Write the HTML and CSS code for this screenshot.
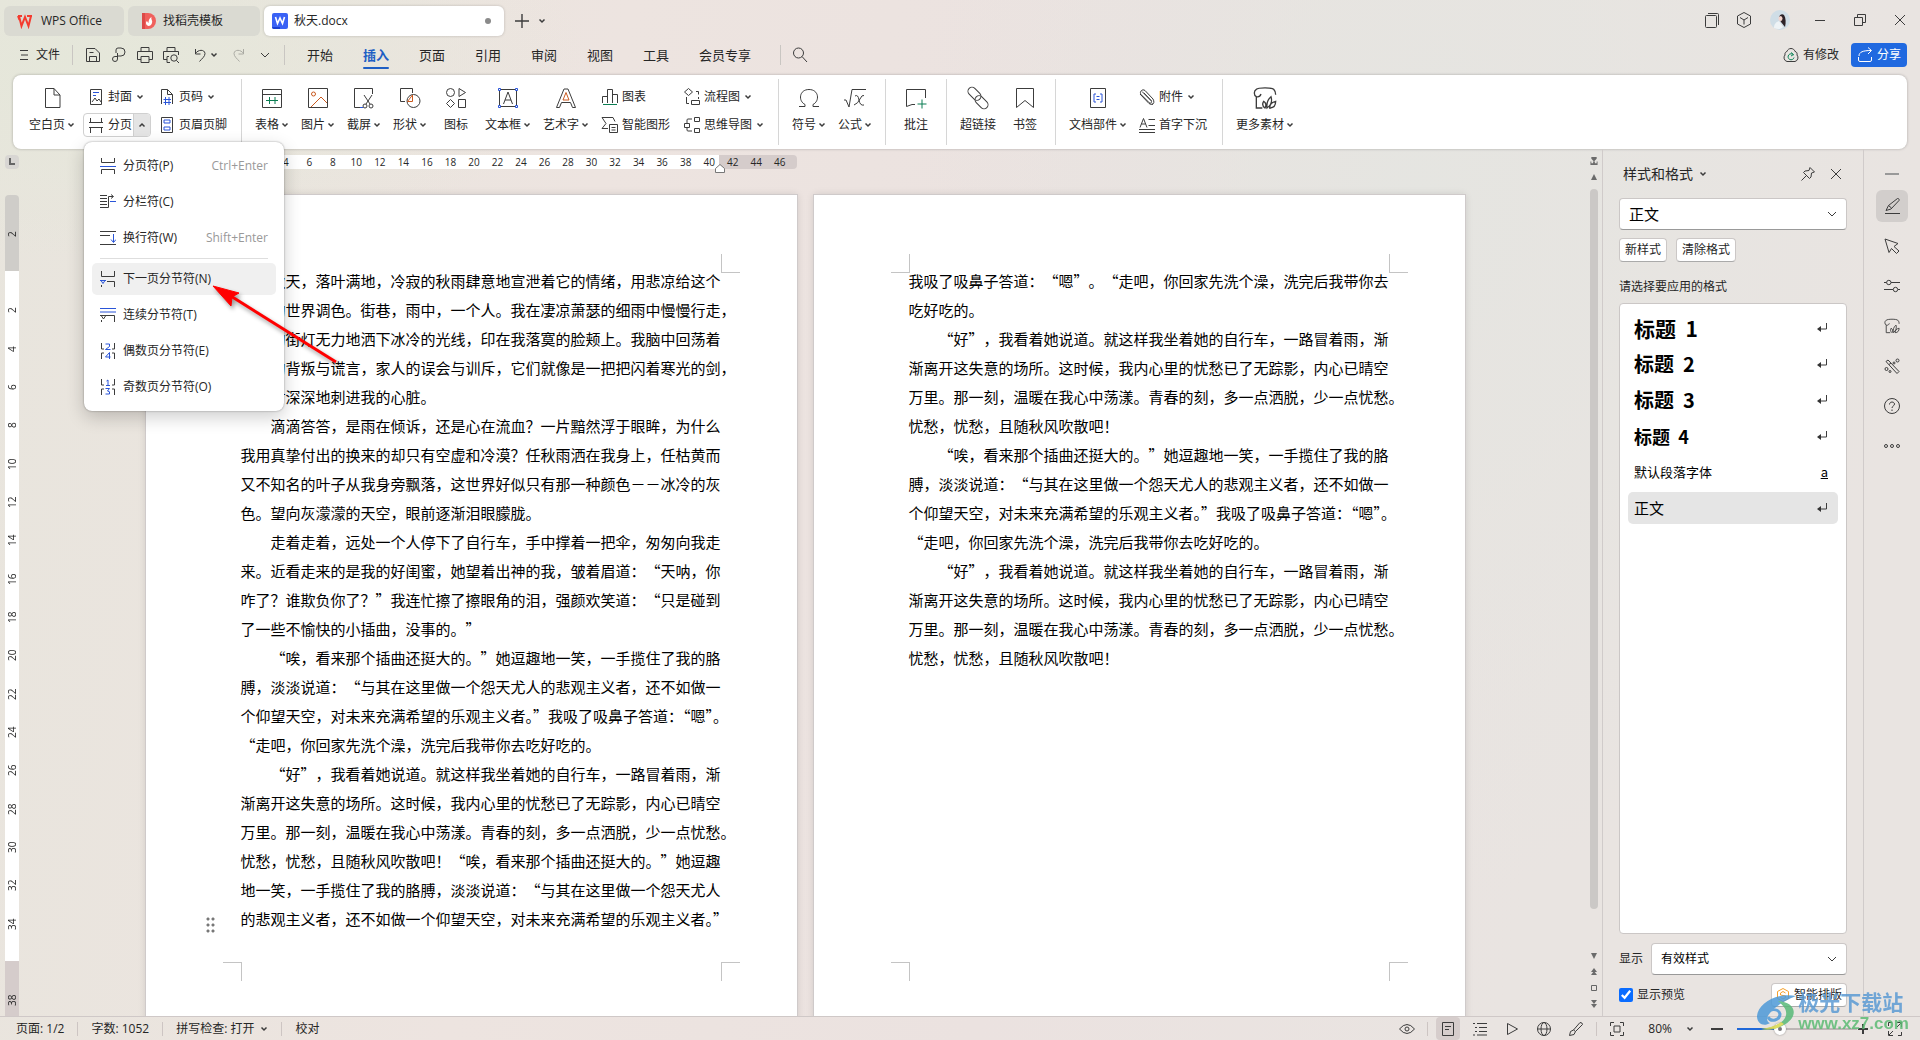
FILE: index.html
```html
<!DOCTYPE html>
<html lang="zh-CN">
<head>
<meta charset="utf-8">
<title>秋天.docx - WPS Office</title>
<link rel="stylesheet" href="styles.css">
</head>
<body>
<svg class="sprite" width="0" height="0" aria-hidden="true">
  <symbol id="caret" viewBox="0 0 8 8"><path d="M1.5 2.5 4 5l2.5-2.5" stroke-width="1.5"/></symbol>
  <symbol id="caret-up" viewBox="0 0 8 8"><path d="M1.5 5.5 4 3l2.5 2.5" stroke-width="1.5"/></symbol>
  <symbol id="chevron" viewBox="0 0 12 12"><path d="M2 4l4 4 4-4"/></symbol>
  <symbol id="close" viewBox="0 0 12 12"><path d="M1 1l10 10M11 1 1 11"/></symbol>
  <symbol id="para" viewBox="0 0 12 12"><path d="M10.5 1v6H3"/><path d="M1 7l4-3v6z" fill="#333" stroke="none"/></symbol>
  <symbol id="pagebreak" viewBox="0 0 16 16"><path d="M1.500 0v4.500h13V0M1.500 16v-4.500h13V16"/><path class="blue" d="M0 8.500h16"/></symbol>
  <symbol id="clip-leaf" viewBox="0 0 18 18"><path d="M7 16.500H2.500V8C.5 7 .5 3.500 2.500 2.500 4 1 14 1 15.500 2.500c1 1 1.500 2 1.500 4M2.500 8c2 .5 3-.5 3.500-2"/><path d="M9 16.500c-2-1.500-2-3.500-1-5 2 1 2 3.500 1 5zm1.500 0c-.5-4 .5-6.500 3-8.500 1 3 0 6.500-3 8.500zm2 0c0-2.500 1.500-4.500 4.500-5 0 3-1.500 5-4.500 5z"/></symbol>
</svg>

<header class="titlebar">
  <nav class="doctabs">
    <a class="doctab home" href="#"><svg class="i16" viewBox="0 0 16 16"><path d="M1 3h4M10 3h5M2 3l2.500 10L8 4l3.500 9L14 3M1 3l1.500 4" stroke="#f43b2f" stroke-width="2"/></svg>WPS Office</a>
    <a class="doctab docer" href="#"><svg class="i16" viewBox="0 0 16 16"><path d="M1 0h6a8 8 0 0 1 0 16H1z" fill="#f0605c" stroke="none"/><path d="M1 0h3v16H1z" fill="#dc4a48" stroke="none"/><path d="M7.500 13c-3-1-3-4-1.500-5 .5 1 1 1.500 1.500 2 0-3 1-5 3-6-1 2 1.500 4 .5 6-.5 2-2 3-3.500 3z" fill="#fff" stroke="none"/></svg>找稻壳模板</a>
    <a class="doctab active" href="#"><svg class="i16" viewBox="0 0 16 16"><rect width="16" height="16" rx="2" fill="#3a62f5" stroke="none"/><path d="M0 14h8v2H2q-2 0-2-2z" fill="#1a3fd0" stroke="none"/><path d="M3.500 4 5.500 10.500 8 5l2.500 5.500L12.500 4" stroke="#fff" stroke-width="1.600"/></svg>秋天.docx<i class="dirty"></i></a>
    <button class="bare" aria-label="新建"><svg class="i14" viewBox="0 0 14 14"><path d="M7 0v14M0 7h14" stroke-width="1.400"/></svg></button>
    <button class="bare" aria-label="标签列表"><svg class="i8"><use href="#caret"/></svg></button>
  </nav>
  <div class="winctl">
    <button class="bare w32" aria-label="窗口"><svg class="i16" viewBox="0 0 16 16"><rect x="1.500" y="3.500" width="11" height="12" rx="1"/><path d="M4 1.500h9.500q1 0 1 1V13"/></svg></button>
    <button class="bare w32" aria-label="应用"><svg class="i16" viewBox="0 0 16 16"><path d="M8 .5 14.500 4v8L8 15.500 1.500 12V4zM4 5.500 8 8l4-2.500M8 8v4.500"/></svg></button>
    <button class="bare w40" aria-label="账号"><svg class="i20" viewBox="0 0 20 20"><circle cx="10" cy="10" r="10" fill="#cfdde6" stroke="none"/><path d="M4 18c0-4 2-6 5-7l4 6c-3 3-6 2-9 1z" fill="#eef3f6" stroke="none"/><path d="M9 8c0-3 3-5 5-3 2 3 2 8 1 12l-4-5z" fill="#2c2228" stroke="none"/><ellipse cx="10.500" cy="8.500" rx="2" ry="2.500" fill="#f3d5cd" stroke="none"/></svg></button>
    <button class="bare w40" aria-label="最小化"><svg class="i12" viewBox="0 0 12 12"><path d="M1 6.500h10"/></svg></button>
    <button class="bare w40" aria-label="还原"><svg class="i14" viewBox="0 0 14 14"><path d="M1.500 4.500h8v8h-8zM4.500 4.500v-3h8v8h-3"/></svg></button>
    <button class="bare w40" aria-label="关闭"><svg class="i12"><use href="#close"/></svg></button>
  </div>
</header>

<div class="menubar">
  <div class="quick">
    <button class="bare file"><svg class="i10" viewBox="0 0 10 12"><path d="M1 1.500h8M2 6h7M1 10.500h8"/></svg>文件</button>
    <span class="vline"></span>
    <button class="bare w26" aria-label="保存"><svg class="i16" viewBox="0 0 16 16"><path d="M1.500 1.500h8.500l4.500 4.500v8.500h-13zM4.500 14V9.500h7V14M4.500 5.500h4"/></svg></button>
    <button class="bare w26" aria-label="导出"><svg class="i16" viewBox="0 0 16 16"><path d="M5 6V3q0-2 2-2h3a4 4 0 0 1 0 8H6.500M6.500 6v6a2.500 2.500 0 1 1-2.500-2.500H7"/></svg></button>
    <button class="bare w26" aria-label="打印"><svg class="i16" viewBox="0 0 16 16"><path d="M4 4.500v-4h8v4M4 12.500H.5v-8h15v8H12M4 9.500h8v6H4z"/></svg></button>
    <button class="bare w26" aria-label="打印预览"><svg class="i16" viewBox="0 0 16 16"><path d="M4 4.500v-4h8v4M4 12.500H.5v-8h15V8M7 15.500H4v-6h2"/><circle cx="11" cy="11" r="3.200"/><path d="M13.500 13.500l2.500 2.500"/></svg></button>
    <button class="bare undo" aria-label="撤销"><svg class="i16" viewBox="0 0 16 16"><path d="M3.500 2v5h5M3.500 6.500C6 2.500 12.500 2 13 6.500c0 3-3 5-5.500 8"/></svg><svg class="i8"><use href="#caret"/></svg></button>
    <button class="bare w26 faint" aria-label="重做"><svg class="i16" viewBox="0 0 16 16"><path d="M12.500 2v5h-5M12.500 6.500C10 2.500 3.500 2 3 6.500c0 3 3 5 5.500 8"/></svg></button>
    <button class="bare w26" aria-label="更多"><svg class="i12"><use href="#chevron"/></svg></button>
    <span class="vline tight"></span>
  </div>
  <nav class="tabs">
    <a href="#">开始</a><a class="on" href="#">插入</a><a href="#">页面</a><a href="#">引用</a><a href="#">审阅</a><a href="#">视图</a><a href="#">工具</a><a class="wide" href="#">会员专享</a>
  </nav>
  <span class="vline search-line"></span>
  <button class="bare w26" aria-label="搜索"><svg class="i16" viewBox="0 0 16 16"><circle cx="6.500" cy="6" r="5"/><path d="M10 9.500l5 5.500"/></svg></button>
  <div class="share-area">
    <button class="bare cloud"><svg class="i16" viewBox="0 0 16 16"><path d="M4 14.500a4 4 0 0 1-2-6.500C1.500 6 3 4.500 4 4.500 5 .5 11 .5 12 4.500c1.500 0 2.500 2 2 3.500a4 4 0 0 1-2 6.500z"/><path d="M10.500 8a3 3 0 1 0 .5 2.500M8 5.500l2.500 2-2.500 1.500" stroke="#0b8457"/></svg>有修改</button>
    <button class="share"><svg class="i16" viewBox="0 0 16 16"><path d="M1.500 10v3q0 1.500 1.500 1.500h10q1.500 0 1.500-1.500v-3M2 9c0-4 4-5.500 12-5.500M11 .5l3.500 3L11 7"/></svg>分享</button>
  </div>
</div>

<section class="ribbon">
  <div class="group first">
    <button class="big w58"><svg class="i24" viewBox="0 0 24 24"><path d="M5.500 2.500H14l6 6.500v12.500H5.500zM14 2.500V9h6"/></svg><span>空白页<svg class="i8"><use href="#caret"/></svg></span></button>
    <div class="pairs breaks">
      <button class="small"><svg class="i20" viewBox="0 0 20 20"><path d="M4.500 2.500h11v15h-11z"/><path class="blue" d="M7 5.500h6M7 8.500h3"/><path d="M6 15l3-4 2 3 2-2 2 3"/></svg>封面<svg class="i8"><use href="#caret"/></svg></button>
      <div class="split-wrap">
        <div class="split"><button class="small"><svg class="i20" viewBox="0 0 20 20"><path d="M4.500 3v4.500h11V3M4.500 18v-5.500h11V18M3 7.500h14M3 12.500h14"/></svg>分页</button><button class="drop" aria-label="分页选项"><svg class="i8"><use href="#caret-up"/></svg></button></div>
        <div class="menu">
          <button><svg class="i16"><use href="#pagebreak"/></svg>分页符(P)<kbd>Ctrl+Enter</kbd></button>
          <button><svg class="i16" viewBox="0 0 16 16"><path d="M0 1.500h7M0 4.500h7M0 7.500h7M0 10.500h7M0 13.500h8.500V2.500H13M11 .5l2.500 2L11 4.500"/><path class="blue" d="M10 7.500h6"/></svg>分栏符(C)</button>
          <button><svg class="i16" viewBox="0 0 16 16"><path d="M0 1.500h16M0 5.500h10M0 14.500h16"/><path class="blue" d="M13.500 4v8M11 9.500l2.500 3 2.500-3"/></svg>换行符(W)<kbd>Shift+Enter</kbd></button>
          <hr>
          <button class="hot"><svg class="i16" viewBox="0 0 16 16"><path d="M1.500 0v5.500h13V0M14.500 16v-5.500H7M1.500 16v-2"/><path class="blue" d="M0 9.500h6M1 9.500l2 3 2-3"/></svg>下一页分节符(N)</button>
          <button><svg class="i16" viewBox="0 0 16 16"><path class="blue" d="M0 1.500h16M0 5h16"/><path d="M14.500 15V8.500H0M1.500 9l2 3 2-3M1.500 15v-2"/></svg>连续分节符(T)</button>
          <button><svg class="i16" viewBox="0 0 16 16"><path d="M1.500 0v6H4M14.500 0v6H12M1.500 16v-6H4M14.500 16v-6H12"/><path class="blue" d="M5.500 1h4v2.500l-4 3h5M9.500 16V9.500l-4 4.500h5"/></svg>偶数页分节符(E)</button>
          <button><svg class="i16" viewBox="0 0 16 16"><path d="M1.500 0v6H4M14.500 0v6H12M1.500 16v-6H4M14.500 16v-6H12"/><path class="blue" d="M6.500 2 8 1v5.500M6 6.500h4M5.500 9.500h4l-2 2.500q3 0 2 3H5.500"/></svg>奇数页分节符(O)</button>
        </div>
      </div>
    </div>
    <div class="pairs headers">
      <button class="small"><svg class="i20" viewBox="0 0 20 20"><path d="M4.500 17V2.500h6l5 5V17M10.500 2.500v5h5"/><path class="blue" d="M8.500 10v8M12 10v8M6.500 12.500h7.500M6.500 15.500h7.500"/></svg>页码<svg class="i8"><use href="#caret"/></svg></button>
      <button class="small"><svg class="i20" viewBox="0 0 20 20"><path d="M4.500 2.500h11v15h-11z"/><path class="blue" d="M7 5h6v3H7zM7 12h6v3H7z"/></svg>页眉页脚</button>
    </div>
  </div>
  <div class="group">
    <button class="big"><svg class="i24" viewBox="0 0 24 24"><path d="M2.500 3.500h19v18h-19zM2.500 8.500h19"/><path class="green" d="M6 14.500h12M9.500 11v7M15 11v7"/></svg><span>表格<svg class="i8"><use href="#caret"/></svg></span></button>
    <button class="big"><svg class="i24" viewBox="0 0 24 24"><path d="M2.500 2.500h19v19h-19z"/><path class="orange" d="M5 21l10-10 6 6"/><circle class="orange" cx="7.500" cy="8" r="2"/></svg><span>图片<svg class="i8"><use href="#caret"/></svg></span></button>
    <button class="big"><svg class="i24" viewBox="0 0 24 24"><path d="M8 21.500H2.500v-19h18V8M12 9l6 9M20 9l-6 9"/><path class="blue" d="M8 21.500h3"/><circle cx="13" cy="20" r="2"/><circle cx="19" cy="20" r="2"/></svg><span>截屏<svg class="i8"><use href="#caret"/></svg></span></button>
    <button class="big"><svg class="i24" viewBox="0 0 24 24"><path d="M7 15.500H2.500v-13h12V7"/><circle cx="15.500" cy="15" r="6.500"/><path class="orange" d="M9.500 15.500l5-6.500v6.500z"/></svg><span>形状<svg class="i8"><use href="#caret"/></svg></span></button>
    <button class="big"><svg class="i24" viewBox="0 0 24 24"><circle cx="6.500" cy="6.500" r="4"/><path d="M15 2.500l6.500 4-6.500 4zM6.500 13.500l4 4-4 4-4-4zM14.500 13.500h7v8h-7z"/></svg><span>图标</span></button>
    <button class="big w58"><svg class="i24" viewBox="0 0 24 24"><path d="M5 3.500h14M5 20.500h14M3.500 5v14M20.500 5v14M7.500 18 12 6l4.500 12M9 14h6"/><path class="blue" d="M2.500 2.500h2v2h-2zM19.500 2.500h2v2h-2zM2.500 19.500h2v2h-2zM19.500 19.500h2v2h-2z"/></svg><span>文本框<svg class="i8"><use href="#caret"/></svg></span></button>
    <button class="big w58"><svg class="i24" viewBox="0 0 24 24"><path d="M2.500 21.500 10 3h4l7.500 18.500h-3l-2-5h-9l-2 5z"/><path class="orange" d="M9 14l3-7.500L15 14z"/></svg><span>艺术字<svg class="i8"><use href="#caret"/></svg></span></button>
    <div class="pairs charts">
      <button class="small"><svg class="i20" viewBox="0 0 20 20"><path d="M2.500 16V9.500h5M7.500 16V2.500h5V16M12.500 7.500h5V16"/><path class="green" d="M3 17.500h14"/></svg>图表</button>
      <button class="small"><svg class="i20" viewBox="0 0 20 20"><path d="M8 13.500H2l4-5-4-6h11l2 4M9.500 9.500h8v8h-8zM11.500 12.500h4M11.500 15h4"/></svg>智能图形</button>
    </div>
    <div class="pairs flows">
      <button class="small"><svg class="i20" viewBox="0 0 20 20"><path d="M6.500 1.500l4 3.500-4 3.500-4-3.500zM14 4.500h2.500v3M16.500 10v2M4.500 10v6.500H7M9.500 13.500h8v4h-8z"/></svg>流程图<svg class="i8"><use href="#caret"/></svg></button>
      <button class="small"><svg class="i20" viewBox="0 0 20 20"><path d="M2.500 8.500h5v4h-5zM12.500 2.500h5v4h-5zM12.500 13.500h5v4h-5zM5 8V5q0-1 1-1h4M5 13v2q0 1 1 1h4"/></svg>思维导图<svg class="i8"><use href="#caret"/></svg></button>
    </div>
  </div>
  <div class="group">
    <button class="big"><svg class="i24" viewBox="0 0 24 24"><path d="M2 20.500h6v-2C1 15 2 3.500 12 3.500S23 15 16 18.500v2h6"/></svg><span>符号<svg class="i8"><use href="#caret"/></svg></span></button>
    <button class="big"><svg class="i24" viewBox="0 0 24 24"><path d="M1 14h2l3 7L9 3.500h14M12 10q3-2 4 4t5 5M21 9.500q-2-1-4 3.500t-6 6"/></svg><span>公式<svg class="i8"><use href="#caret"/></svg></span></button>
  </div>
  <div class="group">
    <button class="big"><svg class="i24" viewBox="0 0 24 24"><path d="M11 18.500H8l-5.500 2V3.500h19V12"/><path class="green" d="M18 13.500v9M13.500 18h9"/></svg><span>批注</span></button>
  </div>
  <div class="group">
    <button class="big w48"><svg class="i24" viewBox="0 0 24 24"><g transform="rotate(45 12 12)"><rect x="-1" y="7.500" width="15" height="8" rx="4"/><rect x="10" y="8.500" width="15" height="8" rx="4"/></g></svg><span>超链接</span></button>
    <button class="big"><svg class="i24" viewBox="0 0 24 24"><path d="M3.500 21.500v-19h17v19L12 14.500z"/></svg><span>书签</span></button>
  </div>
  <div class="group">
    <button class="big w70"><svg class="i24" viewBox="0 0 24 24"><path d="M4.500 2.500h15v19h-15z"/><path class="blue" d="M10 8H8v8h2M14 8h2v8h-2M10.500 10.500h3M10.500 13.500h3"/></svg><span>文档部件<svg class="i8"><use href="#caret"/></svg></span></button>
    <div class="pairs attach">
      <button class="small"><svg class="i20" viewBox="0 0 20 20"><path d="M5 4.500l9 9c1.500 2-.5 3.500-2 2l-8-8c-2-3 1.500-6 4-4l8 8.500c1.500 2.500 1 5-1 5.500M7 6l7.500 8M3 7l9 9.500q2 1.500 4 .5"/></svg>附件<svg class="i8"><use href="#caret"/></svg></button>
      <button class="small"><svg class="i20" viewBox="0 0 20 20"><path d="M3 12.500l3.500-9 3.500 9M4.500 9h4M11.500 4.500H18M11.500 10.500H18M2 14.500h16M2 17.500h16"/></svg>首字下沉</button>
    </div>
  </div>
  <div class="group last">
    <button class="big w70"><svg class="i24"><use href="#clip-leaf"/></svg><span>更多素材<svg class="i8"><use href="#caret"/></svg></span></button>
  </div>
</section>

<main class="work">
  <section class="editor">
    <div class="leftcol">
      <span class="corner"><svg class="i8" viewBox="0 0 8 8"><path d="M2 0v6h5" stroke="#666" stroke-width="2"/></svg></span>
      <div class="vruler">
        <span>2</span><span></span><span>2</span><span>4</span><span>6</span><span>8</span><span>10</span><span>12</span><span>14</span><span>16</span><span>18</span><span>20</span><span>22</span><span>24</span><span>26</span><span>28</span><span>30</span><span>32</span><span>34</span><span></span><span>38</span>
      </div>
    </div>
    <div class="canvas">
      <div class="hruler">
        <span></span><span>4</span><span>6</span><span>8</span><span>10</span><span>12</span><span>14</span><span>16</span><span>18</span><span>20</span><span>22</span><span>24</span><span>26</span><span>28</span><span>30</span><span>32</span><span>34</span><span>36</span><span>38</span><span>40</span><span>42</span><span>44</span><span>46</span>
        <svg class="marker" viewBox="0 0 10 9"><path d="M.5 8.500v-4l4.500-4 4.500 4v4z" fill="#fff" stroke="#777"/></svg>
      </div>
      <article class="page">
        <i class="crop tl"></i><i class="crop tr"></i><i class="crop bl"></i><i class="crop br"></i>
        <i class="grip"></i>
        <p>秋天，落叶满地，冷寂的秋雨肆意地宣泄着它的情绪，用悲凉给这个<br>灰色的世界调色。街巷，雨中，一个人。我在凄凉萧瑟的细雨中慢慢行走，<br>昏黄的街灯无力地洒下冰冷的光线，印在我落寞的脸颊上。我脑中回荡着<br>朋友的背叛与谎言，家人的误会与训斥，它们就像是一把把闪着寒光的剑，<br>而时时深深地刺进我的心脏。</p>
        <p>滴滴答答，是雨在倾诉，还是心在流血？一片黯然浮于眼眸，为什么<br>我用真挚付出的换来的却只有空虚和冷漠？任秋雨洒在我身上，任枯黄而<br>又不知名的叶子从我身旁飘落，这世界好似只有那一种颜色－－冰冷的灰<br>色。望向灰濛濛的天空，眼前逐渐泪眼朦胧。</p>
        <p>走着走着，远处一个人停下了自行车，手中撑着一把伞，匆匆向我走<br>来。近看走来的是我的好闺蜜，她望着出神的我，皱着眉道：“天呐，你<br>咋了？谁欺负你了？”我连忙擦了擦眼角的泪，强颜欢笑道：“只是碰到<br>了一些不愉快的小插曲，没事的。”</p>
        <p>“唉，看来那个插曲还挺大的。”她逗趣地一笑，一手揽住了我的胳<br>膊，淡淡说道：“与其在这里做一个怨天尤人的悲观主义者，还不如做一<br><span class="trim">个仰望天空，对未来充满希望的乐观主义者。”我吸了吸鼻子答道：“嗯”。</span><br>“走吧，你回家先洗个澡，洗完后我带你去吃好吃的。</p>
        <p>“好”，我看着她说道。就这样我坐着她的自行车，一路冒着雨，渐<br>渐离开这失意的场所。这时候，我内心里的忧愁已了无踪影，内心已晴空<br>万里。那一刻，温暖在我心中荡漾。青春的刻，多一点洒脱，少一点忧愁。<br>忧愁，忧愁，且随秋风吹散吧！“唉，看来那个插曲还挺大的。”她逗趣<br>地一笑，一手揽住了我的胳膊，淡淡说道：“与其在这里做一个怨天尤人<br><span class="trim">的悲观主义者，还不如做一个仰望天空，对未来充满希望的乐观主义者。”</span></p>
      </article>
      <article class="page">
        <i class="crop tl"></i><i class="crop tr"></i><i class="crop bl"></i><i class="crop br"></i>
        <p class="flush">我吸了吸鼻子答道：“嗯”。“走吧，你回家先洗个澡，洗完后我带你去<br>吃好吃的。</p>
        <p>“好”，我看着她说道。就这样我坐着她的自行车，一路冒着雨，渐<br>渐离开这失意的场所。这时候，我内心里的忧愁已了无踪影，内心已晴空<br>万里。那一刻，温暖在我心中荡漾。青春的刻，多一点洒脱，少一点忧愁。<br>忧愁，忧愁，且随秋风吹散吧！</p>
        <p>“唉，看来那个插曲还挺大的。”她逗趣地一笑，一手揽住了我的胳<br>膊，淡淡说道：“与其在这里做一个怨天尤人的悲观主义者，还不如做一<br><span class="trim">个仰望天空，对未来充满希望的乐观主义者。”我吸了吸鼻子答道：“嗯”。</span><br>“走吧，你回家先洗个澡，洗完后我带你去吃好吃的。</p>
        <p>“好”，我看着她说道。就这样我坐着她的自行车，一路冒着雨，渐<br>渐离开这失意的场所。这时候，我内心里的忧愁已了无踪影，内心已晴空<br>万里。那一刻，温暖在我心中荡漾。青春的刻，多一点洒脱，少一点忧愁。<br>忧愁，忧愁，且随秋风吹散吧！</p>
      </article>
    </div>
    <div class="scroll">
      <svg class="i8 solid" viewBox="0 0 8 9"><path d="M1 0h6v2L4 5 1 2zM0 5h1v2h2V5h2v2h2V5h1v4H0z"/></svg>
      <svg class="i8 solid" viewBox="0 0 8 8"><path d="M4 1l3 6H1z"/></svg>
      <i class="thumb"></i>
      <svg class="i8 solid" viewBox="0 0 8 8"><path d="M1 1h6L4 7z"/></svg>
      <svg class="i8 solid" viewBox="0 0 8 8"><path d="M4 0l3 4H1zM4 3l3 4H1z"/></svg>
      <svg class="i8" viewBox="0 0 8 8"><path d="M1.500 1.500h5v5h-5z" stroke="#666"/></svg>
      <svg class="i8 solid" viewBox="0 0 8 8"><path d="M1 0h6L4 4zM1 4h6L4 8z"/></svg>
    </div>
  </section>

  <aside class="panel">
    <div class="panel-head">
      <h2>样式和格式</h2><svg class="i8"><use href="#caret"/></svg>
      <button class="bare pin" aria-label="固定"><svg class="i14" viewBox="0 0 14 14"><path d="M9 .5l4.500 4.500-3 1-.5 4-1.500 1.500-6-6L4 4l4-.5zM5.500 8.500l-5 5"/></svg></button>
      <button class="bare" aria-label="关闭"><svg class="i12"><use href="#close"/></svg></button>
    </div>
    <div class="pick"><select class="current" aria-label="当前样式"><option>正文</option></select><svg class="i12"><use href="#chevron"/></svg></div>
    <div class="row-btns"><button class="btn">新样式</button><button class="btn">清除格式</button></div>
    <h3>请选择要应用的格式</h3>
    <ul class="styles">
      <li class="h1">标题  1<svg class="i12"><use href="#para"/></svg></li>
      <li class="h2">标题  2<svg class="i12"><use href="#para"/></svg></li>
      <li class="h3">标题  3<svg class="i12"><use href="#para"/></svg></li>
      <li class="h4">标题  4<svg class="i12"><use href="#para"/></svg></li>
      <li class="def">默认段落字体<u>a</u></li>
      <li class="sel">正文<svg class="i12"><use href="#para"/></svg></li>
    </ul>
    <div class="show"><label for="show">显示</label><div class="pick"><select id="show"><option>有效样式</option></select><svg class="i12"><use href="#chevron"/></svg></div></div>
    <div class="foot">
      <label><input type="checkbox" checked>显示预览</label>
      <button class="btn smart"><svg class="i14" viewBox="0 0 14 14"><path d="M7 .5l5.500 3v7L7 13.500l-5.500-3v-7zM9.500 5 7 3.500 4.500 5v2l5 1v1.500L7 11 4.500 9.500" stroke="#f5a12c"/></svg>智能排版</button>
    </div>
  </aside>

  <nav class="rail">
    <button class="bare" aria-label="收起"><svg class="i16" viewBox="0 0 16 16"><path d="M1 8h14" stroke="#999" stroke-width="2"/></svg></button>
    <button class="bare on" aria-label="样式"><svg class="i16" viewBox="0 0 16 16"><path d="M1 15.500h15M2 12.500l2.500-5 9-7c1.500 0 2 1 1.500 2l-8 8.500zM4.500 7.500 7.500 10"/></svg></button>
    <button class="bare" aria-label="选择"><svg class="i16" viewBox="0 0 16 16"><path d="M1 1l4 13.500 2.500-4 5 5 2.500-2.500-5-4.500 4-3z"/></svg></button>
    <button class="bare" aria-label="设置"><svg class="i16" viewBox="0 0 16 16"><path d="M0 4.500h2.500M7 4.500h9M0 11.500h9M14 11.500h2"/><circle cx="4.800" cy="4.500" r="2.200"/><circle cx="11.500" cy="11.500" r="2.200"/></svg></button>
    <button class="bare" aria-label="素材"><svg class="i16"><use href="#clip-leaf"/></svg></button>
    <button class="bare" aria-label="工具"><svg class="i16" viewBox="0 0 16 16"><path d="M2 3.500 4 2l11 11.500-2 2zM5 6.500 7 5"/><circle cx="13.500" cy="2.500" r="1.500"/><circle cx="10" cy="5" r="1"/><circle cx="2.500" cy="11" r="1.500"/><circle cx="6" cy="13.500" r="1"/></svg></button>
    <button class="bare" aria-label="帮助"><svg class="i16" viewBox="0 0 16 16"><circle cx="8" cy="8" r="7.500"/><path d="M5.500 6.500c0-3.500 5-3 5-.5C10.500 8 8 8 8 10M8 11.500v1.500"/></svg></button>
    <button class="bare" aria-label="更多"><svg class="i16" viewBox="0 0 16 16"><circle cx="2" cy="8" r="1.500"/><circle cx="8" cy="8" r="1.500"/><circle cx="14" cy="8" r="1.500"/></svg></button>
  </nav>
</main>

<footer class="status">
  <span>页面: 1/2</span><i></i><span>字数: 1052</span><i></i><span class="spell">拼写检查: 打开<svg class="i8"><use href="#caret"/></svg></span><i></i><span>校对</span>
  <div class="views">
    <button class="bare" aria-label="护眼"><svg class="i16" viewBox="0 0 16 16"><path d="M.5 8q7.500-9 15 0-7.500 9-15 0z"/><circle cx="8" cy="8" r="2"/></svg></button><i></i>
    <button class="bare on" aria-label="页面视图"><svg class="i14" viewBox="0 0 14 14"><path d="M1.500.5h11v13h-11zM4 4.500h6M4 7.500h4"/></svg></button>
    <button class="bare" aria-label="大纲"><svg class="i14" viewBox="0 0 14 14"><path d="M0 1.500h2M4 1.500h10M2 5.500h2M6 5.500h8M2 9.500h2M6 9.500h8M0 13h2M4 13h10"/></svg></button>
    <button class="bare" aria-label="播放"><svg class="i14" viewBox="0 0 14 14"><path d="M2.500 1.500l10 5.500-10 5.500z"/></svg></button>
    <button class="bare" aria-label="网页"><svg class="i14" viewBox="0 0 14 14"><circle cx="7" cy="7" r="6.500"/><ellipse cx="7" cy="7" rx="3" ry="6.500"/><path d="M.5 7h13"/></svg></button>
    <button class="bare" aria-label="书写"><svg class="i14" viewBox="0 0 14 14"><path d="M.5 13.500l1-4 3-1.500L11 .5q2.500 0 2.500 2L6.500 9.500l-1.500 3zM4.500 8l2 1.500"/></svg></button><i></i>
    <button class="bare fit" aria-label="适应"><svg class="i14" viewBox="0 0 14 14"><path d="M.5 4V.5H4M10 .5h3.500V4M13.500 10v3.500H10M4 13.500H.5V10M4 4h6v6H4z"/></svg></button>
    <span class="pct">80%<svg class="i8"><use href="#caret"/></svg></span>
    <button class="bare" aria-label="缩小"><svg class="i12" viewBox="0 0 12 12"><path d="M0 6h12" stroke-width="2"/></svg></button>
    <input class="zoom" type="range" min="0" max="100" value="34" aria-label="缩放">
    <button class="bare plus" aria-label="放大"><svg class="i10" viewBox="0 0 10 10"><path d="M0 5h10M5 0v10" stroke-width="2"/></svg></button>
    <button class="bare full" aria-label="全屏"><svg class="i14" viewBox="0 0 14 14"><path d="M9 .5h4.500V5M13 1 9 5M.5 9v4.500H5M1 13l4-4M.5 4V.5H4M13.500 10v3.500H10"/></svg></button>
  </div>
</footer>

<svg class="arrow" viewBox="0 0 140 90" aria-hidden="true"><path d="M20 14 130 83" stroke="#f00" stroke-width="3"/><path d="M7 7l26 7-7 4-1 9z" fill="#f00" stroke="#f00"/></svg>
<div class="mark">
  <svg viewBox="0 0 44 40"><path d="M42 2C22-2 4 10 3 22c0 8 7 11 13 7-8-3 1-17 26-27z" fill="#4d9ad8" stroke="none"/><path d="M12 22c-1-7 12-9 14-2 0 6-9 9-12 3" stroke="#4d9ad8" stroke-width="3"/><path d="M24 7c12 1 18 7 15 15-4 9-18 15-32 13 14-1 24-7 25-14 1-5-2-9-8-14z" fill="#58b978" stroke="none"/><path d="M7 35c8-1 15-3 20-7l3 2c-6 5-14 7-23 5z" fill="#d8d84a" stroke="none"/></svg>
  <div><b>极光下载站</b><em>www.xz7.com</em></div>
</div>
</body>
</html>
```
FILE: styles.css
```css
* { box-sizing: border-box; }
body {
  margin: 0; height: 100vh; overflow: hidden; position: relative;
  display: flex; flex-direction: column;
  font: 12px/16px "Open Sans", "Noto Sans CJK SC", sans-serif; color: #262626;
  background:
    radial-gradient(ellipse 500px 200px at 90px 60px, #e5e7da, transparent),
    radial-gradient(ellipse 500px 700px at 1420px 200px, #e5e5e1, transparent),
    linear-gradient(100deg, #e8e5dd 0, #ede4e0 30%, #ebe2e0 55%, #e9e4e1 80%, #e9e4e1 100%);
}
button, select, input { font: inherit; color: inherit; margin: 0; }
button { cursor: pointer; }
a { color: inherit; text-decoration: none; }
svg { fill: none; stroke: #3c3c3c; display: block; flex: none; }
.sprite { position: absolute; }
.blue { stroke: #2a55d8; } .green { stroke: #0b7d52; } .orange { stroke: #c9591e; }
.solid { fill: #6b6b6b; stroke: none; }
.i8 { width: 8px; height: 8px; } .i10 { width: 10px; height: 12px; } .i12 { width: 12px; height: 12px; }
.i14 { width: 14px; height: 14px; } .i16 { width: 16px; height: 16px; } .i20 { width: 20px; height: 20px; } .i24 { width: 24px; height: 24px; }
.bare { border: 0; background: none; padding: 0; display: flex; align-items: center; justify-content: center; }
.w26 { width: 26px; } .w32 { width: 32px; } .w40 { width: 40px; }

.titlebar { display: flex; justify-content: space-between; height: 40px; padding: 0 0 0 4px; align-items: center; flex: none; }
.doctabs { display: flex; gap: 4px; align-items: center; height: 30px; margin-top: 2px; }
.doctab { display: flex; align-items: center; gap: 6px; height: 30px; border-radius: 6px; background: #dadad2; padding: 0 13px; }
.home { width: 120px; } .docer { width: 132px; }
.home { gap: 8px; }
.doctab.active { width: 240px; background: #fff; padding: 0 8px; box-shadow: 0 0 3px #0003; }
.dirty { width: 6px; height: 6px; border-radius: 50%; background: #8a8a8a; margin: 0 5px 0 auto; }
.doctabs .bare { margin-left: 7px; } .doctabs .bare + .bare { margin-left: 5px; }
.winctl { display: flex; }

.menubar { display: flex; align-items: center; height: 30px; flex: none; padding-right: 13px; }
.quick { display: flex; align-items: center; padding-left: 19px; }
.file { gap: 7px; margin-right: 12px; }
.vline { width: 1px; height: 20px; background: #c9c6c2; margin-right: 7px; }
.vline.tight { margin: 0 6px 0 6px; }
.undo { width: 42px; gap: 2px; } .faint { opacity: .35; }
.tabs { display: flex; font-size: 13px; }
.tabs a { width: 56px; height: 24px; text-align: center; display: flex; align-items: center; flex-direction: column; line-height: 24px; }
.tabs .wide { width: 82px; }
.tabs .on { color: #1f5fc4; font-weight: 700; }
.tabs .on::after { content: ""; width: 26px; height: 2px; background: #1f5fc4; border-radius: 1px; flex: none; }
.quick + .tabs { margin-left: 1px; }
.search-line { margin: 0 6px 0 14px; }
.share-area { margin-left: auto; display: flex; gap: 12px; }
.cloud { gap: 4px; }
.share { display: flex; align-items: center; gap: 4px; height: 24px; width: 56px; justify-content: center; border: 0; border-radius: 4px; background: #2069e0; color: #fff; padding: 0; }
.share svg { stroke: #fff; }

.ribbon { display: flex; height: 74px; margin: 5px 13px 0; background: #fff; border-radius: 8px; box-shadow: 0 0 3px #0004; flex: none; }
.group { display: flex; height: 66px; margin: 4px 0; padding: 6px 7px 0; border-right: 1px solid #d6d6d6; }
.group.first { padding-left: 10px; } .group.last { border: 0; }
.big { width: 46px; height: 52px; border: 0; background: none; padding: 1px 0 0; display: flex; flex-direction: column; align-items: center; gap: 7px; }
.big span { display: flex; align-items: center; gap: 2px; white-space: nowrap; }
.w58 { width: 58px; } .w48 { width: 48px; } .w70 { width: 70px; }
.pairs { display: flex; flex-direction: column; gap: 4px; }
.small { display: flex; align-items: center; gap: 2px; height: 24px; border: 0; background: none; padding: 0; white-space: nowrap; }
.small .i8 { margin-left: 2px; }
.breaks { width: 68px; margin: 0 6px 0 2px; } .breaks > .small { padding-left: 3px; }
.headers { width: 77px; } .charts { width: 82px; margin-left: 5px; } .flows { width: 89px; } .attach { margin-left: 4px; width: 78px; }
.split-wrap { position: relative; }
.split { display: flex; height: 24px; border: 1px solid #d0d0d0; border-radius: 4px; overflow: hidden; }
.split .small { flex: 1; height: 22px; padding-left: 2px; }
.drop { width: 17px; border: 0; border-left: 1px solid #d0d0d0; background: #e4e4e4; padding: 0 0 0 4px; }
.menu { position: absolute; z-index: 5; left: 1px; top: 29px; width: 200px; padding: 8px; background: #fff; border-radius: 8px; box-shadow: 0 0 2px #0006, 0 6px 18px #0003; display: flex; flex-direction: column; gap: 4px; }
.menu button { display: flex; align-items: center; gap: 7px; height: 32px; padding: 0 8px; border: 0; border-radius: 5px; background: none; white-space: nowrap; }
.menu .hot { background: #f0f0f0; }
.menu kbd { font: inherit; color: #999; margin-left: auto; }
.menu hr { border: 0; height: 1px; background: #dedede; margin: 0 8px; width: 168px; }

.work { flex: 1; min-height: 0; display: flex; }
.editor { flex: 1; min-width: 0; display: flex; }
.leftcol { width: 24px; padding: 6px 5px 0 5px; display: flex; flex-direction: column; flex: none; }
.corner { height: 14px; background: #d8d6d3; border-radius: 4px; display: flex; align-items: center; justify-content: center; }
.vruler { margin-top: 26px; flex: 1; min-height: 0; overflow: hidden; border-radius: 4px 4px 0 0; padding-top: 20px; font-size: 10px; line-height: 14px;
  background: linear-gradient(#cfcdc9 76px, #fff 76px, #fff 766px, #d5cccb 766px); display: flex; flex-direction: column; }
.vruler span { writing-mode: vertical-rl; transform: rotate(180deg); text-align: center; height: 38px; flex: none; }
.vruler span:nth-child(3n) { height: 39px; }
.canvas { flex: 1; min-width: 0; overflow: hidden; display: grid; grid-template-columns: 651px 651px; grid-template-rows: 14px auto; column-gap: 17px; row-gap: 26px; justify-content: center; padding-top: 6px; }
.hruler { position: relative; grid-column: 1; display: grid; grid-template-columns: repeat(23, 1fr); padding: 0 5px 0 105px; border-radius: 4px; font-size: 10px; line-height: 14px; text-align: center;
  background: linear-gradient(90deg, #d0cdca 95px, #fff 95px, #fff 573px, #d5cccb 573px); }
.marker { position: absolute; left: 569px; top: 9px; width: 10px; height: 9px; }
.page { position: relative; grid-row: 2; background: #fff; height: 900px; padding: 71px 74px 0 95px; box-shadow: 0 0 0 1px #cfcaca, 0 0 8px #0002; font: 15px/29px "Noto Sans CJK SC", sans-serif; color: #000; white-space: nowrap; text-spacing-trim: space-all; }
.page p { margin: 0; text-indent: 30px; }
.page .flush { text-indent: 0; }
.trim { text-spacing-trim: trim-start; }
.crop { position: absolute; width: 19px; height: 19px; border: 0 solid #c4c4c4; }
.tl, .bl { left: 77px; border-right-width: 1px; } .tr, .br { left: 575px; border-left-width: 1px; }
.tl, .tr { top: 59px; border-bottom-width: 1px; } .bl, .br { top: 767px; border-top-width: 1px; }
.grip { position: absolute; left: 60px; top: 722px; width: 10px; height: 16px; background: radial-gradient(circle at 2px 2px, #777 1px, transparent 2px) 0 0 / 5px 6px; }
.scroll { width: 16px; padding: 8px 0 8px 4px; display: flex; flex-direction: column; align-items: flex-start; gap: 8px; }
.thumb { width: 8px; height: 720px; border-radius: 4px; background: #cbc8c6; margin-bottom: auto; }

.panel { width: 262px; border-left: 1px solid #d0cbca; border-right: 1px solid #d0cbca; padding: 14px 16px 9px; display: flex; flex-direction: column; flex: none; }
.panel-head { display: flex; align-items: center; height: 22px; gap: 6px; padding: 0 5px 0 4px; }
.panel h2 { font-size: 14px; font-weight: 400; margin: 0; } .pin { margin: 0 9px 0 auto; }
.pick { position: relative; display: flex; flex: 1; }
.pick select { width: 100%; height: 32px; appearance: none; background: #fff; border: 1px solid #cbc7c6; border-bottom-color: #999; border-radius: 4px; padding: 0 9px; color: #000; }
.pick svg { position: absolute; right: 9px; top: 10px; pointer-events: none; }
.panel > .pick { margin-top: 13px; flex: none; } .pick .current { font-size: 15px; }
.row-btns { display: flex; gap: 9px; margin-top: 8px; }
.btn { height: 24px; border: 1px solid #cbc7c6; border-bottom-color: #aaa; border-radius: 4px; background: #fff; padding: 0 5px; display: flex; align-items: center; gap: 4px; white-space: nowrap; }
.panel h3 { font-size: 12px; font-weight: 400; margin: 17px 0 8px; }
.styles { list-style: none; margin: 0; padding: 8px; flex: 1; min-height: 0; background: #fff; border: 1px solid #cbc7c6; border-radius: 4px; display: flex; flex-direction: column; gap: 4px; color: #000; }
.styles li { display: flex; align-items: center; justify-content: space-between; height: 32px; padding: 0 10px 0 6px; border-radius: 5px; font: 15px/20px "Noto Sans CJK SC", sans-serif; white-space: pre; }
.styles .h1 { font-size: 21px; font-weight: 700; }
.styles .h2, .styles .h3 { font-size: 20px; font-weight: 700; } .styles .h4 { font-size: 18px; font-weight: 700; }
.styles .def { font-size: 13px; } .styles .sel { background: #e5e5e5; }
.show { display: flex; align-items: center; gap: 8px; margin-top: 9px; }
.foot { display: flex; align-items: center; justify-content: space-between; margin-top: 8px; height: 24px; }
.foot label { display: flex; align-items: center; gap: 4px; }
.foot input { width: 14px; height: 14px; accent-color: #0a6cff; }
.smart { padding: 0 4px; }

.rail { width: 56px; padding: 9px 0; display: flex; flex-direction: column; align-items: center; gap: 8px; flex: none; }
.rail .bare { width: 32px; height: 32px; border-radius: 6px; } .rail .on { background: #d2cecc; }
.rail .bare:first-child { height: 24px; margin-top: 4px; margin-bottom: -4px; }

.status { height: 24px; border-top: 1px solid #cfc8c7; display: flex; align-items: center; padding: 0 13px 0 16px; flex: none; }
.status > i, .views i { width: 1px; height: 14px; background: #cdc5c3; margin: 0 12px; }
.status > i { margin: 0 13px; }
.spell { display: flex; align-items: center; gap: 6px; }
.views { margin-left: auto; display: flex; align-items: center; }
.views i { margin: 0 8px; }
.views .bare { width: 24px; height: 23px; margin-right: 8px; border-radius: 4px; }
.views .on { background: #d6cdcc; }
.views .bare:has(+ i) { margin-right: 0; }
.views .fit { margin-right: 19px; }
.pct { display: flex; align-items: center; gap: 14px; margin-right: 11px; }
.zoom { appearance: none; width: 120px; height: 12px; background: linear-gradient(90deg, #2068d8 42px, #bdb6b5 42px) center / 100% 2px no-repeat; }
.zoom::-webkit-slider-thumb { appearance: none; width: 12px; height: 12px; border-radius: 50%; background: #777; border: 4px solid #fff; box-shadow: 0 0 2px #0006; }
.views .plus { width: 12px; margin: 0 14px 0 0; } .views .full { margin: 0; }

.arrow { position: absolute; left: 206px; top: 279px; width: 140px; height: 90px; z-index: 9; pointer-events: none; filter: drop-shadow(2px 3px 2px #0006); }
.mark { position: absolute; right: 11px; bottom: 6px; z-index: 8; display: flex; opacity: .85; pointer-events: none; }
.mark svg { width: 44px; height: 40px; margin-top: 6px; }
.mark div { display: flex; flex-direction: column; }
.mark b { font: 700 21px/26px "Noto Sans CJK SC", sans-serif; color: #5c9bd4; }
.mark em { font: 700 17px/20px "Liberation Sans", sans-serif; color: #5dbb74; }
```
